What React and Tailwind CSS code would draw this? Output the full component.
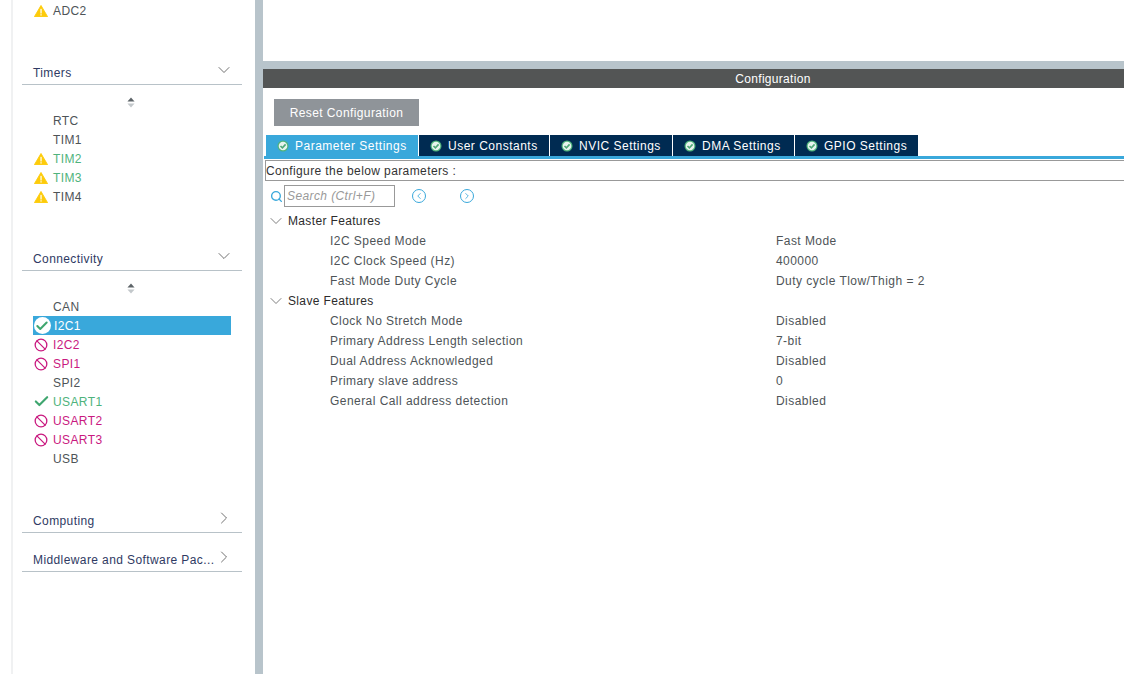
import { ChevronDown, ChevronRight, Search, Check, Ban, ChevronLeft } from 'lucide-react';

function Warn() {
  return (
    <svg width="14" height="12" viewBox="0 0 15 13">
      <path d="M7.5 0.5 L14.6 12.6 L0.4 12.6 Z" fill="#fdcb0a" stroke="#fdcb0a" strokeLinejoin="round" />
      <rect x="6.9" y="4.2" width="1.3" height="5" fill="#fff" />
      <rect x="6.9" y="10" width="1.3" height="1.4" fill="#fff" />
    </svg>
  );
}

function SortArrows() {
  return (
    <div className="flex justify-center w-[196px] h-[18px] items-center">
      <svg width="8" height="11" viewBox="0 0 9 12">
        <path d="M4.5 0.5 L8.5 5 L0.5 5 Z" fill="#5d6468" />
        <path d="M4.5 11.5 L8.5 7 L0.5 7 Z" fill="#c3c8cb" />
      </svg>
    </div>
  );
}

function TabCheck() {
  return (
    <svg width="12" height="12" viewBox="0 0 12 12" className="shrink-0">
      <circle cx="6" cy="6" r="5.5" fill="#4fb37c" />
      <circle cx="6" cy="6" r="4.3" fill="#e8f3ee" />
      <path d="M3.5 6 L5.4 7.9 L8.6 4.4" fill="none" stroke="#4fa877" strokeWidth="1.6" />
    </svg>
  );
}

function Row({ label, status, color = 'text-[#4e5457]', selected }) {
  return (
    <div className={`flex items-center h-[19px] w-[198px] ${selected ? 'bg-[#39a8db]' : ''}`}>
      <div className="w-[20px] flex justify-center shrink-0 ml-[-2px] mr-[2px]">
        {status === 'warn' && <Warn />}
        {status === 'ban' && <Ban size={14} strokeWidth={2.2} className="text-[#c9197f]" />}
        {status === 'ok' && <Check size={17} strokeWidth={3} className="text-[#3fa66f]" />}
        {status === 'okcircle' && (
          <div className="w-[17px] h-[17px] rounded-full bg-white flex items-center justify-center ml-[2px]">
            <Check size={14} strokeWidth={3.5} className="text-[#3fa66f]" />
          </div>
        )}
      </div>
      <span className={`text-[12px] leading-none tracking-[0.4px] ${selected ? 'ml-[1px]' : ''} ${color}`}>{label}</span>
    </div>
  );
}

function Heading({ label, open }) {
  const Icon = open ? ChevronDown : ChevronRight;
  return (
    <div className="border-b border-[#b8c2c8] h-[21px] w-[220px] ml-[-11px] pl-[11px] pr-[8px] flex justify-between items-start">
      <span className="text-[12px] leading-[18px] text-[#2f3a63] whitespace-nowrap tracking-[0.4px]">{label}</span>
      <Icon size={20} strokeWidth={1} className="text-[#555] mt-[-4px] shrink-0" />
    </div>
  );
}

const tabs = ['Parameter Settings', 'User Constants', 'NVIC Settings', 'DMA Settings', 'GPIO Settings'];
const tabWidths = ['w-[153px]', 'w-[131px]', 'w-[123px]', 'w-[122px]', 'w-[124px]'];

function Param({ label, value }) {
  return (
    <div className="flex items-center h-[20px] text-[12px] text-[#4e5457] tracking-[0.45px]">
      <span className="w-[513px] pl-[67px] shrink-0">{label}</span>
      <span>{value}</span>
    </div>
  );
}

function Group({ label }) {
  return (
    <div className="flex items-center h-[20px] text-[12px] text-[#2c2c2c] tracking-[0.35px]">
      <ChevronDown size={20} strokeWidth={1} className="text-[#666] ml-[3px] mr-[2px]" />
      <span>{label}</span>
    </div>
  );
}

export default function App() {
  return (
    <div className="flex h-[674px] w-[1124px] overflow-hidden bg-white font-['Liberation_Sans',Arial,sans-serif]">
      {/* left side panel */}
      <div className="w-[11px] shrink-0" />
      <div className="w-[2px] shrink-0 bg-[#f0f1f2]" />
      <div className="w-[242px] shrink-0 pl-[20px] pt-[1px]">
        <Row label="ADC2" status="warn" />
        <div className="h-[44px]" />
        <Heading label="Timers" open />
        <div className="h-[8px]" />
        <SortArrows />
        <Row label="RTC" />
        <Row label="TIM1" />
        <Row label="TIM2" status="warn" color="text-[#4fb37c]" />
        <Row label="TIM3" status="warn" color="text-[#4fb37c]" />
        <Row label="TIM4" status="warn" />
        <div className="h-[44px]" />
        <Heading label="Connectivity" open />
        <div className="h-[8px]" />
        <SortArrows />
        <Row label="CAN" />
        <Row label="I2C1" status="okcircle" color="text-white" selected />
        <Row label="I2C2" status="ban" color="text-[#c9197f]" />
        <Row label="SPI1" status="ban" color="text-[#c9197f]" />
        <Row label="SPI2" />
        <Row label="USART1" status="ok" color="text-[#4fb37c]" />
        <Row label="USART2" status="ban" color="text-[#c9197f]" />
        <Row label="USART3" status="ban" color="text-[#c9197f]" />
        <Row label="USB" />
        <div className="h-[44px]" />
        <Heading label="Computing" />
        <div className="h-[18px]" />
        <Heading label="Middleware and Software Pac..." />
      </div>
      <div className="w-[8px] shrink-0 bg-[#b8c4cb]" />

      {/* right side, the config panel runs past the window edge */}
      <div className="w-[1020px] shrink-0">
        <div className="h-[61px]" />
        <div className="h-[8px] bg-[#b8c4cb]" />
        <div className="h-[19px] bg-[#535555] text-white text-[12px] tracking-[0.3px] flex items-center justify-center">
          Configuration
        </div>
        <div className="pt-[11px] pl-[11px]">
          <button className="w-[145px] h-[27px] bg-[#8f9499] text-white text-[12px] tracking-[0.4px] text-center">
            Reset Configuration
          </button>
        </div>
        <div className="flex mt-[9px] pl-[3px] h-[21px]">
          {tabs.map((t, i) => (
            <div
              key={t}
              className={`flex items-center pl-[11px] gap-[6px] text-white text-[12px] tracking-[0.5px] border-r border-white ${tabWidths[i]} ${i === 0 ? 'bg-[#39a8db]' : 'bg-[#002b52]'}`}
            >
              <TabCheck />
              <span className="whitespace-nowrap">{t}</span>
            </div>
          ))}
        </div>
        <div className="h-[3px] bg-[#39a8db] ml-[1px]" />
        <div className="ml-[2px] mt-[1px] h-[21px] border border-[#999] border-r-0 text-[12px] text-[#333] tracking-[0.4px] leading-[20px]">
          Configure the below parameters :
        </div>
        <div className="flex items-center ml-[7px] mt-[4px] h-[22px]">
          <Search size={13} strokeWidth={2.5} className="text-[#39a8db] mr-[1px]" />
          <div className="w-[111px] h-[22px] border border-[#999] text-[12px] italic text-[#999] leading-[20px] pl-[2px] tracking-[0.4px]">
            Search (Ctrl+F)
          </div>
          <div className="w-[14px] h-[14px] ml-[17px] rounded-full border-[1.5px] border-[#39a8db] flex items-center justify-center">
            <ChevronLeft size={10} strokeWidth={2} className="text-[#39a8db]" />
          </div>
          <div className="w-[14px] h-[14px] ml-[34px] rounded-full border-[1.5px] border-[#39a8db] flex items-center justify-center">
            <ChevronRight size={10} strokeWidth={2} className="text-[#39a8db]" />
          </div>
        </div>
        <div className="mt-[4px]">
          <Group label="Master Features" />
          <Param label="I2C Speed Mode" value="Fast Mode" />
          <Param label="I2C Clock Speed (Hz)" value="400000" />
          <Param label="Fast Mode Duty Cycle" value="Duty cycle Tlow/Thigh = 2" />
          <Group label="Slave Features" />
          <Param label="Clock No Stretch Mode" value="Disabled" />
          <Param label="Primary Address Length selection" value="7-bit" />
          <Param label="Dual Address Acknowledged" value="Disabled" />
          <Param label="Primary slave address" value="0" />
          <Param label="General Call address detection" value="Disabled" />
        </div>
      </div>
    </div>
  );
}
